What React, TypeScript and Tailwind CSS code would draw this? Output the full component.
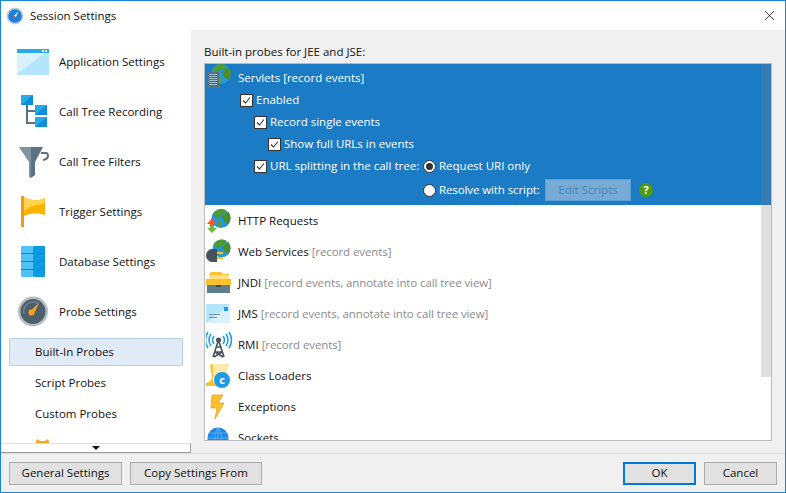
import React from 'react';
import { X } from 'lucide-react';

// --- sidebar icons ---
const AppIcon = () => (
  <svg width="32" height="32" viewBox="0 0 32 32">
    <rect x="0" y="3" width="32" height="26" fill="#b3e5fc" />
    <path d="M0 7H28L0 28Z" fill="#d8f1fd" />
    <rect x="0" y="3" width="32" height="4" fill="#29a9e8" />
    <rect x="25" y="4" width="2" height="2" fill="#fff" />
    <rect x="28" y="4" width="2" height="2" fill="#fff" />
  </svg>
);

const TreeIcon = () => (
  <svg width="32" height="32" viewBox="0 0 32 32" className="overflow-visible">
    <path d="M10 9V27H18M10 15H18" fill="none" stroke="#5b7080" strokeWidth="2" />
    <rect x="4" y="-1" width="12" height="10" fill="#29a9e8" />
    <path d="M4 9L16 -1V9Z" fill="#0b8fdc" />
    <rect x="18" y="9" width="12" height="10" fill="#29a9e8" />
    <path d="M18 19L30 9V19Z" fill="#0b8fdc" />
    <rect x="18" y="21" width="12" height="10" fill="#29a9e8" />
    <path d="M18 31L30 21V31Z" fill="#0b8fdc" />
  </svg>
);

const FunnelIcon = () => (
  <svg width="32" height="32" viewBox="0 0 32 32" className="overflow-visible">
    <path d="M24 7H29Q31 7 31 10Q31 13 26 14" fill="none" stroke="#5d7280" strokeWidth="2" />
    <path d="M2 1H14V32L12 31V16Z" fill="#7f949f" />
    <path d="M14 1H26L18 16V29L14 32Z" fill="#5d7280" />
  </svg>
);

const FlagIcon = () => (
  <svg width="32" height="32" viewBox="0 0 32 32">
    <rect x="4" y="0" width="3" height="31" fill="#f39a1d" />
    <path d="M7 1Q17 7 28 2V19Q17 15 7 20Z" fill="#ffb300" />
    <path d="M7 1Q17 7 28 2L27 8Q15 8 7 15Z" fill="#ffd54f" />
  </svg>
);

const DbIcon = () => (
  <svg width="32" height="32" viewBox="0 0 32 32">
    <rect x="4" y="0" width="12" height="31" rx="1" fill="#4fc3f7" />
    <rect x="16" y="0" width="12" height="31" rx="1" fill="#0a9be3" />
    <rect x="4" y="7" width="24" height="1" fill="#5b7080" />
    <rect x="4" y="15" width="24" height="1" fill="#5b7080" />
    <rect x="4" y="23" width="24" height="1" fill="#5b7080" />
  </svg>
);

const ProbeIcon = () => (
  <svg width="32" height="32" viewBox="0 0 32 32">
    <circle cx="16" cy="15.5" r="15" fill="#b4bcc0" />
    <circle cx="16" cy="15.5" r="12.5" fill="#4e5f6c" />
    <path d="M7 18A9.5 9.5 0 0 1 22 8" fill="none" stroke="#6d8190" strokeWidth="1.5" />
    <path d="M13 15L22 7L17 18Z" fill="#f9a11b" />
    <circle cx="14.5" cy="16.5" r="3" fill="#f9a11b" />
  </svg>
);

// --- probe list icons ---
const Globe = ({ cx, cy, r }: { cx: number; cy: number; r: number }) => (
  <g transform={`translate(${cx - r} ${cy - r}) scale(${r / 10})`}>
    <circle cx="10" cy="10" r="10" fill="#2196e3" />
    <path d="M2 4Q8 -2 15 1L14 6L9 6L8 11L1.5 6Z" fill="#4f9a33" />
    <path d="M11 8L18 3Q22 9 18 16L13 13Z" fill="#4a8f2a" />
    <path d="M7 12L11 13L10 19.5L7 18Z" fill="#5c9e31" />
  </g>
);

const ServletIcon = () => (
  <svg width="26" height="26" viewBox="0 0 26 26">
    <Globe cx={15} cy={10} r={10} />
    <rect x="1" y="8" width="12" height="16" fill="#5b7080" />
    <rect x="3" y="10" width="8" height="1" fill="#90b4c4" />
    <rect x="3" y="12" width="8" height="1" fill="#90b4c4" />
    <rect x="3" y="14" width="8" height="1" fill="#90b4c4" />
    <rect x="3" y="16" width="8" height="1" fill="#90b4c4" />
    <rect x="3" y="18" width="8" height="1" fill="#90b4c4" />
    <rect x="3" y="20" width="8" height="1" fill="#90b4c4" />
  </svg>
);

const HttpIcon = () => (
  <svg width="26" height="26" viewBox="0 0 26 26">
    <Globe cx={15} cy={10.5} r={9.5} />
    <path d="M1 16L6 10L11 16H8V18H4V16Z" fill="#ef5a28" />
    <path d="M1 20L6 25L11 20H8V18H4V20Z" fill="#6dbb3c" />
  </svg>
);

const WsIcon = () => (
  <svg width="26" height="26" viewBox="0 0 26 26">
    <Globe cx={15.5} cy={9.5} r={9} />
    <rect x="11" y="13" width="6" height="2" fill="#f5c02e" />
    <rect x="11" y="18" width="6" height="2" fill="#f5c02e" />
    <path d="M6 10H11V23H6A6 6.5 0 0 1 6 10Z" fill="#46535c" />
  </svg>
);

const JndiIcon = () => (
  <svg width="26" height="26" viewBox="0 0 26 26">
    <path d="M3 5L5 2H15L17 4H23V12H3Z" fill="#fbc02d" />
    <rect x="3" y="5" width="20" height="5" fill="#ffe082" />
    <rect x="0" y="9" width="25" height="6" fill="#fbc02d" />
    <rect x="1" y="15" width="23" height="8" fill="#607d8b" />
    <rect x="10" y="15" width="5" height="2" fill="#37474f" />
  </svg>
);

const JmsIcon = () => (
  <svg width="26" height="26" viewBox="0 0 26 26">
    <rect x="0" y="3" width="24" height="19" fill="#b3e5fc" />
    <path d="M0 22L24 3V22Z" fill="#d8f1fd" />
    <rect x="18" y="6" width="4" height="4" fill="#1e9be6" />
    <rect x="3" y="13" width="11" height="1" fill="#7d929e" />
    <rect x="3" y="16" width="8" height="1" fill="#7d929e" />
  </svg>
);

const RmiIcon = () => (
  <svg width="26" height="26" viewBox="0 0 26 26">
    <path d="M8 4Q5 8 8 12M5 2Q1 8 5 14M2 0Q-3 8 2 16M17 4Q20 8 17 12M20 2Q24 8 20 14M23 0Q28 8 23 16" fill="none" stroke="#1e9be6" strokeWidth="1.5" />
    <circle cx="12.5" cy="8" r="2.5" fill="#46535c" />
    <path d="M12.5 8L7 25M12.5 8L18 25M10 15H15M8.5 20H16.5M8 25L16 20M17 25L9 20" fill="none" stroke="#46535c" strokeWidth="1.6" />
  </svg>
);

const LoaderIcon = () => (
  <svg width="26" height="26" viewBox="0 0 26 26">
    <path d="M4 1H24Q21 4 21 8V14H6Z" fill="#ffe9a8" />
    <path d="M4 1Q7 1 7 5V20H0Q5 19 6 14Z" fill="#fbc02d" />
    <path d="M0 20H12V23H0Z" fill="#fbc02d" />
    <circle cx="16" cy="17" r="8" fill="#1e9be6" />
    <text x="16" y="21" textAnchor="middle" fontSize="11" fontWeight="700" fill="#fff" fontFamily="'Open Sans', sans-serif">c</text>
  </svg>
);

const BoltIcon = () => (
  <svg width="26" height="26" viewBox="0 0 26 26">
    <path d="M6 1H17L12 9H18L9 25L11 14H5Z" fill="#fbc02d" stroke="#e8a410" strokeWidth="0.8" />
  </svg>
);

const SocketIcon = () => (
  <svg width="26" height="26" viewBox="0 0 26 26">
    <circle cx="12" cy="13" r="10.5" fill="#1e88e5" />
    <path d="M1.5 13H22.5M3 8H21M3 18H21M12 2.5V23.5M12 2.5Q5 13 12 23.5M12 2.5Q19 13 12 23.5" fill="none" stroke="#64b5f6" strokeWidth="0.8" />
  </svg>
);

const TitleIcon = () => (
  <svg width="18" height="18" viewBox="0 0 18 18">
    <circle cx="9" cy="9" r="8.5" fill="#c4ccd2" />
    <circle cx="9" cy="9" r="6.8" fill="#1b7fdc" />
    <path d="M8 9L12.5 4L10 10Z" fill="#fff" />
    <path d="M8 9L10 10L6.5 13Z" fill="#f0582a" />
  </svg>
);

// --- form bits ---
const Check = () => (
  <span className="flex h-[13px] w-[13px] shrink-0 items-center justify-center border border-[#333] bg-white">
    <svg width="9" height="9" viewBox="0 0 9 9">
      <path d="M1 4.5L3.5 7L8 1.5" fill="none" stroke="#333" strokeWidth="1.1" />
    </svg>
  </span>
);

const Radio = ({ on }: { on?: boolean }) => (
  <span className="flex h-[13px] w-[13px] shrink-0 items-center justify-center rounded-full border border-[#333] bg-white">
    {on && <span className="h-[7px] w-[7px] rounded-full bg-[#333]" />}
  </span>
);

const Btn = ({ label, w, primary }: { label: string; w: string; primary?: boolean }) => (
  <button className={`h-[23px] ${w} ${primary ? 'border-2 border-[#0078d7]' : 'border border-[#adadad]'} bg-[#e1e1e1] text-center leading-none text-[#111]`}>
    {label}
  </button>
);

const mainItems = [
  { label: 'Application Settings', icon: <AppIcon /> },
  { label: 'Call Tree Recording', icon: <TreeIcon /> },
  { label: 'Call Tree Filters', icon: <FunnelIcon /> },
  { label: 'Trigger Settings', icon: <FlagIcon /> },
  { label: 'Database Settings', icon: <DbIcon /> },
  { label: 'Probe Settings', icon: <ProbeIcon /> },
];

const probes = [
  { name: 'HTTP Requests', note: '', icon: <HttpIcon /> },
  { name: 'Web Services', note: '[record events]', icon: <WsIcon /> },
  { name: 'JNDI', note: '[record events, annotate into call tree view]', icon: <JndiIcon /> },
  { name: 'JMS', note: '[record events, annotate into call tree view]', icon: <JmsIcon /> },
  { name: 'RMI', note: '[record events]', icon: <RmiIcon /> },
  { name: 'Class Loaders', note: '', icon: <LoaderIcon /> },
  { name: 'Exceptions', note: '', icon: <BoltIcon /> },
  { name: 'Sockets', note: '', icon: <SocketIcon /> },
];

export default function App() {
  return (
    <div className="flex h-[493px] w-[786px] flex-col overflow-hidden border border-[#1a86d9] bg-[#f0f0f0] font-['Open_Sans',sans-serif] text-[11.5px] text-[#111]">
      {/* title bar */}
      <div className="flex h-[29px] shrink-0 items-center bg-white pl-[5px] pr-[7px]">
        <TitleIcon />
        <span className="ml-[6px] flex-1">Session Settings</span>
        <X size={17} strokeWidth={1.1} className="text-[#111]" />
      </div>

      <div className="flex min-h-0 flex-1">
        {/* sidebar */}
        <div className="flex w-[190px] shrink-0 flex-col bg-white">
          <div className="min-h-0 flex-1 overflow-hidden pt-[7px]">
            {mainItems.map((item) => (
              <div key={item.label} className="flex h-[50px] items-center pl-[16px]">
                <span className="mr-[10px] h-[32px] w-[32px] shrink-0">{item.icon}</span>
                {item.label}
              </div>
            ))}
            <div className="flex h-[30px] items-center pl-[8px] pr-[8px]">
              <div className="flex h-[28px] w-full items-center rounded-[2px] border border-[#b5cfe7] bg-[#e1ebf5] pl-[25px]">Built-In Probes</div>
            </div>
            <div className="flex h-[31px] items-center pl-[34px]">Script Probes</div>
            <div className="flex h-[31px] items-center pl-[34px]">Custom Probes</div>
            <div className="pl-[35px] pt-[10px]">
              <svg width="13" height="6" viewBox="0 0 13 6" className="block">
                <path d="M0 6V2L2 0L4 2H9L11 0L13 2V6Z" fill="#f5a623" />
              </svg>
            </div>
          </div>
          <div className="flex h-[10px] shrink-0 items-center justify-center border-t border-b border-r border-t-[#e0e0e0] border-b-[#a0a0a0] border-r-[#a0a0a0] bg-white">
            <svg width="8" height="4" viewBox="0 0 8 4">
              <path d="M0 0H8L4 4Z" fill="#111" />
            </svg>
          </div>
        </div>

        {/* probes panel */}
        <div className="flex min-w-0 flex-1 flex-col pl-[13px] pr-[13px] pt-[14px]">
          <div className="mb-[3px] h-[16px] leading-[16px]">Built-in probes for JEE and JSE:</div>
          <div className="relative h-[378px] overflow-hidden border border-[#bbb] bg-white">
            <div className="h-[141px] bg-[#1b7bc4] text-white">
              <div className="flex h-[25px] pl-[1px]">
                <span className="mr-[6px] h-[26px] w-[26px] shrink-0"><ServletIcon /></span>
                <span className="pt-[6px] leading-[16px]">Servlets [record events]</span>
              </div>
              <div className="flex h-[22px] items-center gap-[3px] pl-[35px]"><Check />Enabled</div>
              <div className="flex h-[22px] items-center gap-[3px] pl-[49px]"><Check />Record single events</div>
              <div className="flex h-[22px] items-center gap-[3px] pl-[63px]"><Check />Show full URLs in events</div>
              <div className="flex h-[22px] items-center pl-[49px]">
                <span className="mr-[3px]"><Check /></span>
                <span className="w-[153px]">URL splitting in the call tree:</span>
                <Radio on />
                <span className="ml-[3px]">Request URI only</span>
              </div>
              <div className="flex h-[26px] items-center pl-[218px]">
                <Radio />
                <span className="ml-[3px] w-[106px] tracking-[-0.1px]">Resolve with script:</span>
                <span className="flex h-[22px] w-[86px] items-center justify-center border border-[#5f9fd2] bg-[#77aad4] text-[#4d87b8]">Edit Scripts</span>
                <span className="ml-[8px] flex h-[14px] w-[14px] items-center justify-center rounded-full bg-[#4f9a0e] text-[11px] font-bold text-white">?</span>
              </div>
            </div>
            {probes.map((p) => (
              <div key={p.name} className="flex h-[31px] items-center pl-[1px]">
                <span className="mr-[6px] h-[26px] w-[26px] shrink-0">{p.icon}</span>
                <span>{p.name}</span>
                {p.note && <span className="ml-[3px] tracking-[-0.1px] text-[#8c8c8c]">{p.note}</span>}
              </div>
            ))}
            {/* overlay scrollbar thumb */}
            <div className="absolute right-0 top-0 h-[313px] w-[10px] bg-[#80808040]" />
          </div>
        </div>
      </div>

      {/* footer */}
      <div className="flex h-[39px] shrink-0 items-center border-t border-[#dcdcdc] bg-[#f0f0f0] pl-[8px] pr-[8px]">
        <Btn label="General Settings" w="w-[113px]" />
        <div className="ml-[8px]"><Btn label="Copy Settings From" w="w-[132px]" /></div>
        <div className="flex-1" />
        <Btn label="OK" w="w-[73px]" primary />
        <div className="ml-[8px]"><Btn label="Cancel" w="w-[73px]" /></div>
      </div>
    </div>
  );
}
